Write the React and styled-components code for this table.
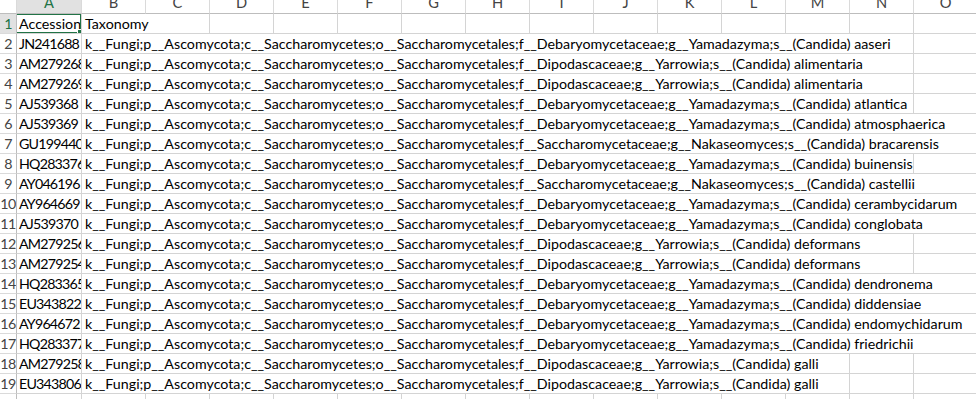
import styled, { createGlobalStyle } from 'styled-components';

const GlobalStyle = createGlobalStyle`
	html, body {
		margin: 0;
		padding: 0;
		background: #fff;
		overflow: hidden;
	}
	body {
		font-family: Lato, "Liberation Sans", sans-serif;
	}
`

const COLS = ['B', 'C', 'D', 'E', 'F', 'G', 'H', 'I', 'J', 'K', 'L', 'M', 'N', 'O'];

// accession, family;genus;species tail, number of columns the text spills over
const rows = [
	['JN241688', 'Debaryomycetaceae;g__Yamadazyma;s__(Candida) aaseri', 13],
	['AM279268', 'Dipodascaceae;g__Yarrowia;s__(Candida) alimentaria', 13],
	['AM279269', 'Dipodascaceae;g__Yarrowia;s__(Candida) alimentaria', 13],
	['AJ539368', 'Debaryomycetaceae;g__Yamadazyma;s__(Candida) atlantica', 13],
	['AJ539369', 'Debaryomycetaceae;g__Yamadazyma;s__(Candida) atmosphaerica', 14],
	['GU199440', 'Saccharomycetaceae;g__Nakaseomyces;s__(Candida) bracarensis', 14],
	['HQ283376', 'Debaryomycetaceae;g__Yamadazyma;s__(Candida) buinensis', 13],
	['AY046196', 'Saccharomycetaceae;g__Nakaseomyces;s__(Candida) castellii', 14],
	['AY964669', 'Debaryomycetaceae;g__Yamadazyma;s__(Candida) cerambycidarum', 14],
	['AJ539370', 'Debaryomycetaceae;g__Yamadazyma;s__(Candida) conglobata', 14],
	['AM279256', 'Dipodascaceae;g__Yarrowia;s__(Candida) deformans', 13],
	['AM279254', 'Dipodascaceae;g__Yarrowia;s__(Candida) deformans', 13],
	['HQ283365', 'Debaryomycetaceae;g__Yamadazyma;s__(Candida) dendronema', 14],
	['EU343822', 'Debaryomycetaceae;g__Yamadazyma;s__(Candida) diddensiae', 14],
	['AY964672', 'Debaryomycetaceae;g__Yamadazyma;s__(Candida) endomychidarum', 14],
	['HQ283377', 'Debaryomycetaceae;g__Yamadazyma;s__(Candida) friedrichii', 14],
	['AM279258', 'Dipodascaceae;g__Yarrowia;s__(Candida) galli', 12],
	['EU343806', 'Dipodascaceae;g__Yarrowia;s__(Candida) galli', 12],
];

const PREFIX = 'k__Fungi;p__Ascomycota;c__Saccharomycetes;o__Saccharomycetales;f__';

const Sheet = styled.div`
	width: 976px;
	height: 399px;
	overflow: hidden;
	font-size: 14.25px;
	color: #000;
`

const Row = styled.div`
	display: flex;
	height: ${p => p.$head ? 14 : 20}px;
`

const HeadCell = styled.div`
	box-sizing: border-box;
	flex: 0 0 ${p => p.$w}px;
	height: 14px;
	overflow: hidden;
	border-right: 1px solid #dadada;
	border-bottom: 1px solid #bdbdbd;
	background: ${p => p.$active ? '#e1e1e1' : '#fff'};
	color: ${p => p.$active ? '#217346' : '#444'};
	font-size: 14.67px;
	text-align: center;
	line-height: 1;
	span {
		display: block;
		margin-top: -4px;
	}
`

const RowHead = styled.div`
	box-sizing: border-box;
	flex: 0 0 17px;
	border-right: 1px solid #bdbdbd;
	border-bottom: 1px solid #dadada;
	background: ${p => p.$active ? '#e1e1e1' : '#fff'};
	color: ${p => p.$active ? '#217346' : '#444'};
	text-align: center;
	line-height: 20px;
	letter-spacing: -0.6px;
	overflow: hidden;
	white-space: nowrap;
`

const Cell = styled.div`
	box-sizing: border-box;
	position: relative;
	flex: 0 0 ${p => p.$w}px;
	border-right: 1px solid #d4d4d4;
	border-bottom: 1px solid #d4d4d4;
	padding-left: ${p => p.$pad ?? 2}px;
	line-height: 20px;
	white-space: nowrap;
	letter-spacing: ${p => p.$tight ? '-0.8px' : 'normal'};
	overflow: ${p => p.$clip ? 'hidden' : 'visible'};
`

const Selection = styled.div`
	position: absolute;
	left: -2px;
	top: -1px;
	right: -1px;
	bottom: -1px;
	border: 2px solid #217346;
	pointer-events: none;
`

const Handle = styled.div`
	position: absolute;
	right: -4px;
	bottom: -4px;
	width: 5px;
	height: 5px;
	background: #217346;
	border: 1px solid #fff;
`

const SpanRow = ({ num, acc, text, span, active }) => {
	const rest = COLS.slice(span);
	return (
		<Row>
			<RowHead $active={active}>{num}</RowHead>
			<Cell $w={65} $clip $tight={!active}>
				{acc}
				{active && <Selection><Handle /></Selection>}
			</Cell>
			<Cell $w={span * 64} $pad={3}>{text}</Cell>
			{rest.map(c => <Cell key={c} $w={64} />)}
		</Row>
	)
}

const App = () => {
	return (
		<>
			<GlobalStyle />
			<Sheet>
				<Row $head>
					<HeadCell $w={17} />
					<HeadCell $w={65} $active><span>A</span></HeadCell>
					{COLS.map(c => <HeadCell key={c} $w={64}><span>{c}</span></HeadCell>)}
				</Row>
				<SpanRow num={1} acc="Accession" text="Taxonomy" span={2} active />
				{rows.map((r, i) => (
					<SpanRow key={r[0] + i} num={i + 2} acc={r[0]} text={PREFIX + r[1]} span={r[2]} />
				))}
				<SpanRow num={20} acc="" text="" span={1} />
			</Sheet>
		</>
	)
}

export default App;
